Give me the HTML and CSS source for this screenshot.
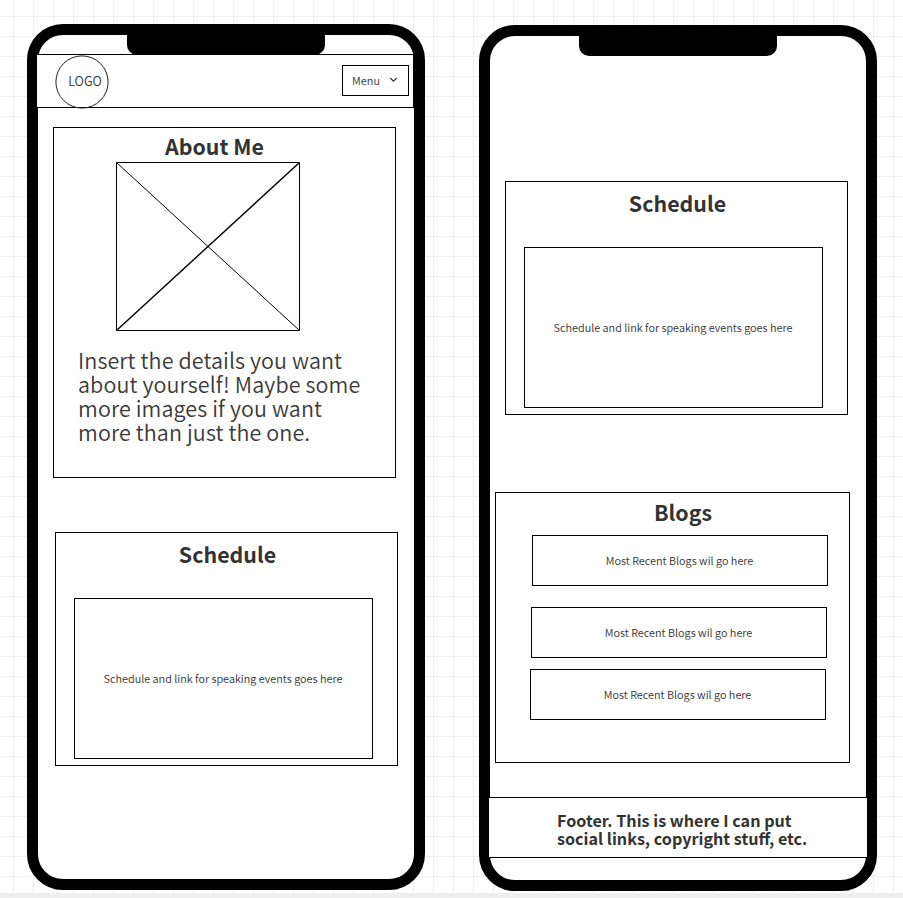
FILE: index.html
```html
<!DOCTYPE html>
<html lang="en">
<head>
<meta charset="utf-8">
<title>Mobile wireframes</title>
<link rel="stylesheet" href="styles.css">
</head>
<body>
<main class="board">
  <div class="phone phone-home">
    <div class="notch"></div>
    <header class="site-header">
      <div class="logo">
        <svg class="logo-ring" width="55" height="55" viewBox="0 0 55 55"><circle cx="27" cy="27" r="26.1"/></svg>
        <span class="logo-text">LOGO</span>
      </div>
      <div class="menu">
        <span class="menu-label">Menu</span>
        <svg class="chevron" width="9" height="6" viewBox="0 0 9 6"><path d="M1.300 1l3.200 3.200L7.700 1"/></svg>
      </div>
    </header>
    <section class="box about">
      <h2 class="heading">About Me</h2>
      <svg class="image-slot" width="184" height="169" viewBox="0 0 184 169"><path d="M.5.5h183v168H.5zL183.500 168.500"/><path class="rising" d="M183.500.5L.5 168.500"/></svg>
      <p class="intro">Insert the details you want<br>about yourself! Maybe some<br>more images if you want<br>more than just the one.</p>
    </section>
    <section class="box schedule">
      <h2 class="heading">Schedule</h2>
      <div class="box events"><span>Schedule and link for speaking events goes here</span></div>
    </section>
  </div>
  <div class="phone phone-more">
    <div class="notch"></div>
    <section class="box schedule">
      <h2 class="heading">Schedule</h2>
      <div class="box events"><span>Schedule and link for speaking events goes here</span></div>
    </section>
    <section class="box blogs">
      <h2 class="heading">Blogs</h2>
      <div class="box post post-first"><span>Most Recent Blogs wil go here</span></div>
      <div class="box post post-second"><span>Most Recent Blogs wil go here</span></div>
      <div class="box post post-third"><span>Most Recent Blogs wil go here</span></div>
    </section>
    <footer class="site-footer">Footer. This is where I can put<br>social links, copyright stuff, etc.</footer>
  </div>
</main>
<div class="bottom-bar"></div>
</body>
</html>
```
FILE: styles.css
```css
* { box-sizing: border-box; }
body {
  margin: 0;
  height: 898px;
  overflow: hidden;
  display: flex;
  flex-direction: column;
  color: #333;
  font-family: "Noto Sans CJK SC", "Noto Sans", sans-serif;
  font-size: 10.85px;
  font-weight: 350;
  background-color: #fff;
  background-image:
    linear-gradient(to right, #eee 1px, transparent 1px),
    linear-gradient(to bottom, #eee 1px, transparent 1px);
  background-size: 20px 20px;
  background-position: 13px 0, 0 16px;
}
h2, p { margin: 0; }
span { white-space: nowrap; }
.board {
  height: 893px;
  padding: 24px 0 0 27px;
  display: flex;
  gap: 54px;
  align-items: flex-start;
}
.bottom-bar { height: 5px; flex: none; background: #efefef; }
.phone {
  width: 398px;
  height: 866px;
  flex: none;
  display: flex;
  flex-direction: column;
  align-items: flex-start;
  border: 11px solid #000;
  border-radius: 36px;
  background: #fff;
}
.phone-more { margin-top: 1px; }
.notch {
  width: 198px;
  height: 20px;
  flex: none;
  margin-left: 89px;
  background: #000;
  border-radius: 0 0 10px 10px;
}
.box { border: 1px solid #000; background: #fff; flex: none; }
.site-header {
  width: 378px;
  height: 54px;
  flex: none;
  margin: -1px 0 0 -2px;
  padding: 0 4px 0 18px;
  border: 1px solid #000;
  background: #fff;
  display: flex;
  justify-content: space-between;
}
.logo {
  width: 55px;
  height: 55px;
  display: grid;
  place-items: center;
}
.logo-ring, .logo-text { grid-area: 1 / 1; }
.logo-ring { fill: none; stroke: #222; stroke-width: 1; }
.logo-text { font-size: 12.600px; line-height: 16px; margin: -3px 0 0 5px; }
.menu {
  width: 67px;
  height: 31px;
  margin-top: 10px;
  border: 1px solid #000;
  padding: 0 10px 0 9px;
  display: flex;
  align-items: center;
  justify-content: space-between;
  line-height: 16px;
}
.menu-label { margin-top: -2px; letter-spacing: 0.1px; }
.chevron { fill: none; stroke: #333; stroke-width: 1.1; margin-top: -2px; }
.heading {
  font-size: 21.400px;
  font-weight: 700;
  line-height: 24px;
  text-align: center;
  white-space: nowrap;
}
.about { width: 343px; height: 351px; margin: 19px 0 0 15px; padding: 6px 0 0 24px; }
.about .heading { width: 273px; }
.image-slot { display: block; margin: 4px 0 0 38px; fill: none; stroke: #000; stroke-width: 1; }
.rising { stroke-width: 1.4; }
.intro { font-size: 21.500px; line-height: 24px; letter-spacing: 0.1px; margin-top: 17px; white-space: nowrap; color: #3a3a3a; }
.schedule { width: 343px; height: 234px; padding: 9px 0 0 18px; }
.schedule .heading { width: 307px; margin-bottom: 32px; }
.phone-home .schedule { margin: 54px 0 0 17px; }
.phone-more .schedule { margin: 125px 0 0 15px; }
.events, .post { display: flex; align-items: center; justify-content: center; line-height: 16px; padding: 0 1px 2px 0; }
.events { width: 299px; height: 161px; }
.blogs { width: 355px; height: 271px; margin: 77px 0 0 5px; padding: 7px 0 0 34px; }
.blogs .heading { width: 306px; margin-bottom: 11px; }
.post { width: 296px; height: 51px; }
.post-first { margin-left: 2px; }
.post-second { margin: 21px 0 0 1px; }
.post-third { margin-top: 11px; }
.site-footer {
  width: 380px;
  height: 61px;
  flex: none;
  margin: 34px 0 0 -2px;
  padding: 13px 0 0 68px;
  border: 1px solid #000;
  background: #fff;
  font-size: 16.150px;
  font-weight: 700;
  line-height: 18px;
  white-space: nowrap;
}
```
